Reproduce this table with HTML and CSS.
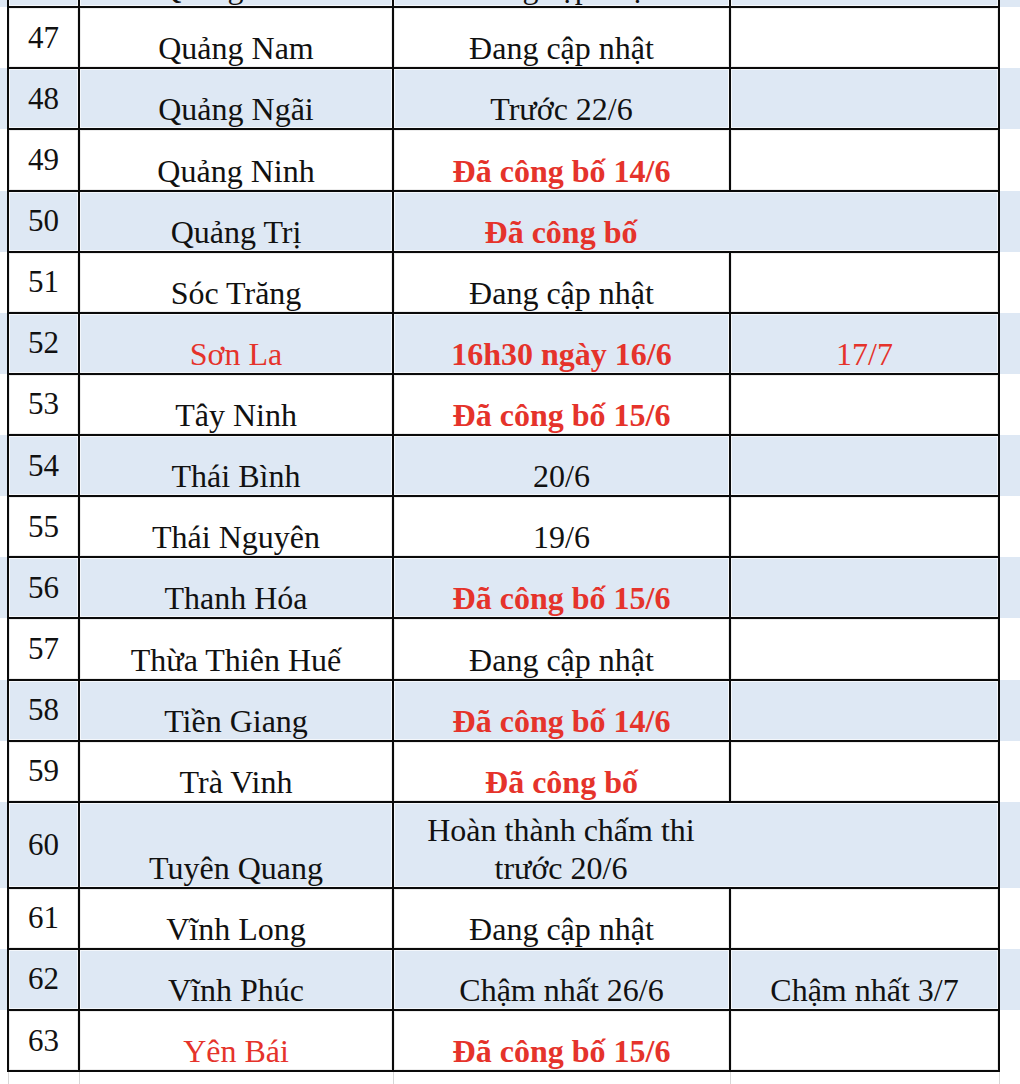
FILE: index.html
```html
<!DOCTYPE html>
<html lang="vi">
<head>
<meta charset="utf-8">
<title>Lịch công bố điểm thi</title>
<link rel="stylesheet" href="styles.css">
</head>
<body>
<table class="sheet">
  <colgroup>
    <col class="c-edge-l"><col class="c-num"><col class="c-name"><col class="c-status"><col class="c-extra"><col class="c-edge-r">
  </colgroup>
  <tbody>
    <tr class="band">
      <td class="edge"></td><td class="num">46</td><td class="txt">Quảng Bình</td><td class="txt">Đang cập nhật</td><td class="txt"></td><td class="edge"></td>
    </tr>
    <tr>
      <td class="edge"></td><td class="num">47</td><td class="txt">Quảng Nam</td><td class="txt">Đang cập nhật</td><td class="txt"></td><td class="edge"></td>
    </tr>
    <tr class="band">
      <td class="edge"></td><td class="num">48</td><td class="txt">Quảng Ngãi</td><td class="txt">Trước 22/6</td><td class="txt"></td><td class="edge"></td>
    </tr>
    <tr>
      <td class="edge"></td><td class="num">49</td><td class="txt">Quảng Ninh</td><td class="txt red strong">Đã công bố 14/6</td><td class="txt"></td><td class="edge"></td>
    </tr>
    <tr class="band">
      <td class="edge"></td><td class="num">50</td><td class="txt">Quảng Trị</td><td class="txt red strong wide" colspan="2">Đã công bố</td><td class="edge"></td>
    </tr>
    <tr>
      <td class="edge"></td><td class="num">51</td><td class="txt">Sóc Trăng</td><td class="txt">Đang cập nhật</td><td class="txt"></td><td class="edge"></td>
    </tr>
    <tr class="band">
      <td class="edge"></td><td class="num">52</td><td class="txt red">Sơn La</td><td class="txt red strong">16h30 ngày 16/6</td><td class="txt red">17/7</td><td class="edge"></td>
    </tr>
    <tr>
      <td class="edge"></td><td class="num">53</td><td class="txt">Tây Ninh</td><td class="txt red strong">Đã công bố 15/6</td><td class="txt"></td><td class="edge"></td>
    </tr>
    <tr class="band">
      <td class="edge"></td><td class="num">54</td><td class="txt">Thái Bình</td><td class="txt">20/6</td><td class="txt"></td><td class="edge"></td>
    </tr>
    <tr>
      <td class="edge"></td><td class="num">55</td><td class="txt">Thái Nguyên</td><td class="txt">19/6</td><td class="txt"></td><td class="edge"></td>
    </tr>
    <tr class="band">
      <td class="edge"></td><td class="num">56</td><td class="txt">Thanh Hóa</td><td class="txt red strong">Đã công bố 15/6</td><td class="txt"></td><td class="edge"></td>
    </tr>
    <tr>
      <td class="edge"></td><td class="num">57</td><td class="txt">Thừa Thiên Huế</td><td class="txt">Đang cập nhật</td><td class="txt"></td><td class="edge"></td>
    </tr>
    <tr class="band">
      <td class="edge"></td><td class="num">58</td><td class="txt">Tiền Giang</td><td class="txt red strong">Đã công bố 14/6</td><td class="txt"></td><td class="edge"></td>
    </tr>
    <tr>
      <td class="edge"></td><td class="num">59</td><td class="txt">Trà Vinh</td><td class="txt red strong">Đã công bố</td><td class="txt"></td><td class="edge"></td>
    </tr>
    <tr class="band tall">
      <td class="edge"></td><td class="num">60</td><td class="txt">Tuyên Quang</td><td class="txt wide" colspan="2">Hoàn thành chấm thi<br>trước 20/6</td><td class="edge"></td>
    </tr>
    <tr>
      <td class="edge"></td><td class="num">61</td><td class="txt">Vĩnh Long</td><td class="txt">Đang cập nhật</td><td class="txt"></td><td class="edge"></td>
    </tr>
    <tr class="band">
      <td class="edge"></td><td class="num">62</td><td class="txt">Vĩnh Phúc</td><td class="txt">Chậm nhất 26/6</td><td class="txt">Chậm nhất 3/7</td><td class="edge"></td>
    </tr>
    <tr>
      <td class="edge"></td><td class="num">63</td><td class="txt red">Yên Bái</td><td class="txt red strong">Đã công bố 15/6</td><td class="txt"></td><td class="edge"></td>
    </tr>
    <tr class="blank">
      <td class="edge"></td><td class="grid"></td><td class="grid"></td><td class="grid"></td><td class="grid"></td><td class="edge"></td>
    </tr>
  </tbody>
</table>
</body>
</html>
```

FILE: styles.css
```css
html, body {
  margin: 0;
  padding: 0;
  background: #ffffff;
  overflow: hidden;
}

body {
  width: 1020px;
  height: 1084px;
}

.sheet {
  margin-top: -55px;
  width: 1020px;
  table-layout: fixed;
  border-collapse: collapse;
  font-family: "Liberation Serif", "Times New Roman", serif;
  font-size: 32px;
  color: #111111;
}

.c-edge-l { width: 8px; }
.c-num { width: 71px; }
.c-name { width: 314px; }
.c-status { width: 337px; }
.c-extra { width: 269px; }
.c-edge-r { width: 21px; }

.sheet tr {
  height: 61.13px;
}

.sheet tr.tall {
  height: 86px;
}

.sheet tr.blank {
  height: 40px;
}

.band {
  background: #dee8f4;
}

.sheet td {
  padding: 0;
  white-space: nowrap;
  overflow: hidden;
}

.num, .txt {
  border: 2px solid #0a0a0a;
  text-align: center;
  box-shadow: inset 0 0 0 1px #ececec;
}

.band .num, .band .txt {
  box-shadow: inset 0 0 0 1px #f4f7fb;
}

.num {
  vertical-align: middle;
  font-size: 31px;
  line-height: 38px;
  padding-top: 6px;
}

.txt {
  vertical-align: bottom;
  line-height: 38px;
  padding-bottom: 0;
}

.txt.wide {
  padding-right: 270px;
}

.edge {
  border: none;
}

.red {
  color: #e5332b;
}

.strong {
  font-weight: bold;
}

.grid {
  border: 1px solid #d6d6d6;
}
```
